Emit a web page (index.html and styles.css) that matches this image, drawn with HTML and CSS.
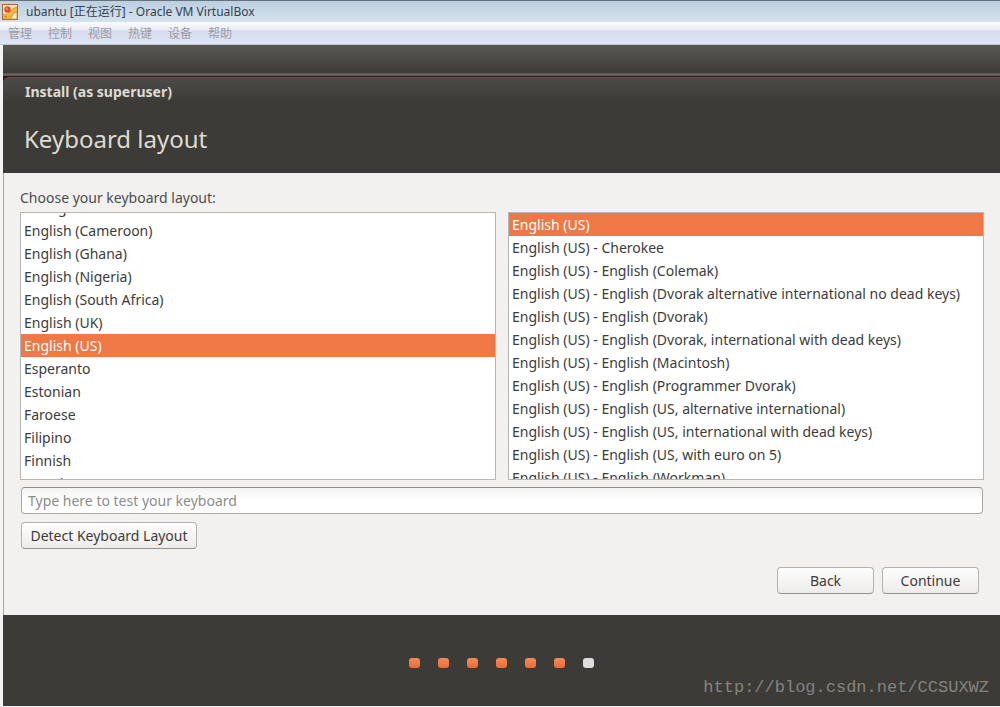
FILE: index.html
```html
<!DOCTYPE html>
<html lang="en">
<head>
<meta charset="utf-8">
<title>ubantu [正在运行] - Oracle VM VirtualBox</title>
<link rel="stylesheet" href="styles.css">
</head>
<body>
<header class="titlebar">
  <svg class="app-icon" viewBox="0 0 16 16" aria-hidden="true">
    <rect x="0.5" y="0.5" width="15" height="15" fill="#f9e5b8" stroke="#a5683c"/>
    <path d="M1 11 Q5 12 8 9 Q9 5 15 3 V8 Q11 9 10 12 Q9 14 8 15 H1Z" fill="#f2b63a"/>
    <path d="M1 10.500 Q6 11 8 8 Q10 4 15 3" fill="none" stroke="#c9812c" stroke-width="0.8"/>
    <path d="M8 15 Q10 14 10 12 Q11 9 15 8 V15Z" fill="#fbeecb" stroke="#c98526" stroke-width="0.8"/>
    <circle cx="5.500" cy="5.500" r="3.200" fill="#d9502c"/>
    <circle cx="4.800" cy="4.800" r="1.300" fill="#ee8a62"/>
    <circle cx="3.500" cy="12.500" r="1" fill="#d9702c"/>
  </svg>
  <span>ubantu [正在运行] - Oracle VM VirtualBox</span>
</header>
<nav class="menubar">
  <button type="button">管理</button>
  <button type="button">控制</button>
  <button type="button">视图</button>
  <button type="button">热键</button>
  <button type="button">设备</button>
  <button type="button">帮助</button>
</nav>
<div class="screen">
  <div class="panel"></div>
  <main class="installer">
    <header class="heading">
      <p class="window-title">Install (as superuser)</p>
      <h1>Keyboard layout</h1>
    </header>
    <form class="content">
      <p class="prompt" id="prompt">Choose your keyboard layout:</p>
      <div class="lists">
        <ul class="list scrolled" role="listbox" aria-labelledby="prompt">
          <li role="option">Dzongkha</li>
          <li role="option">English (Cameroon)</li>
          <li role="option">English (Ghana)</li>
          <li role="option">English (Nigeria)</li>
          <li role="option">English (South Africa)</li>
          <li role="option">English (UK)</li>
          <li role="option" class="selected" aria-selected="true">English (US)</li>
          <li role="option">Esperanto</li>
          <li role="option">Estonian</li>
          <li role="option">Faroese</li>
          <li role="option">Filipino</li>
          <li role="option">Finnish</li>
          <li role="option">French</li>
        </ul>
        <ul class="list" role="listbox" aria-label="Layout variant">
          <li role="option" class="selected" aria-selected="true">English (US)</li>
          <li role="option">English (US) - Cherokee</li>
          <li role="option">English (US) - English (Colemak)</li>
          <li role="option">English (US) - English (Dvorak alternative international no dead keys)</li>
          <li role="option">English (US) - English (Dvorak)</li>
          <li role="option">English (US) - English (Dvorak, international with dead keys)</li>
          <li role="option">English (US) - English (Macintosh)</li>
          <li role="option">English (US) - English (Programmer Dvorak)</li>
          <li role="option">English (US) - English (US, alternative international)</li>
          <li role="option">English (US) - English (US, international with dead keys)</li>
          <li role="option">English (US) - English (US, with euro on 5)</li>
          <li role="option">English (US) - English (Workman)</li>
        </ul>
      </div>
      <input class="test-field" type="text" aria-label="Test your keyboard" placeholder="Type here to test your keyboard">
      <button class="button detect" type="button">Detect Keyboard Layout</button>
      <div class="actions">
        <button class="button step" type="button">Back</button>
        <button class="button step" type="button">Continue</button>
      </div>
    </form>
    <footer class="footer">
      <div class="dots">
        <i class="dot"></i><i class="dot"></i><i class="dot"></i><i class="dot"></i><i class="dot"></i><i class="dot"></i><i class="dot pending"></i>
      </div>
      <span class="watermark">http://blog.csdn.net/CCSUXWZ</span>
    </footer>
  </main>
</div>
</body>
</html>
```

FILE: styles.css
```css
* { box-sizing: border-box; }
html { height: 100%; }
body {
  margin: 0;
  min-height: 100%;
  display: flex;
  flex-direction: column;
  background: #f4f4f4;
  color: #3c3c3c;
  font: 14px/23px "Noto Sans", "Open Sans", sans-serif;
}
p, h1, ul { margin: 0; padding: 0; }
button, input { font: inherit; color: inherit; }

.titlebar {
  display: flex;
  align-items: center;
  gap: 8px;
  height: 22px;
  padding: 0 2px;
  border-top: 1px solid #66727c;
  background: linear-gradient(#bccfe0, #d5e2ee);
  color: #34424f;
  font: 12px/20px "Noto Sans", "Noto Sans CJK SC", sans-serif;
}
.app-icon { width: 16px; height: 16px; }

.menubar {
  display: flex;
  gap: 16px;
  height: 23px;
  padding: 0 8px;
  border-bottom: 1px solid #c3c5cc;
  background: linear-gradient(#fbfcfe, #e9ecf6 35%, #d6dbee 40%, #e0e5f5);
}
.menubar button {
  padding: 0;
  border: 0;
  background: none;
  color: #9b9ca3;
  font: 12px/22px "Noto Sans CJK SC", sans-serif;
}

.screen {
  flex: 1;
  display: flex;
  flex-direction: column;
  margin: 0 0 1px 3px;
}
.panel {
  height: 31px;
  border-bottom: 3px solid #635e58;
  background: linear-gradient(#595852, #3c3b37);
}
.installer {
  flex: 1;
  display: flex;
  flex-direction: column;
  border-top: 1px solid #2c1a22;
  background: #2c1a22;
}
.heading {
  padding: 2px 21px 16px;
  border-top: 1px solid #65504a;
  border-radius: 6px 0 0 0;
  background: linear-gradient(#4d4b47, #3c3b37 24px);
  color: #dfdbd2;
}
.window-title { padding-left: 1px; font-weight: 700; }
.heading h1 {
  padding-top: 18px;
  font-size: 24px;
  line-height: 36px;
  font-weight: 400;
}

.content {
  display: flex;
  flex-direction: column;
  padding: 13px 16px 21px;
  border-left: 1px solid #a9a8a6;
  background: #f2f1f0;
}
.prompt { padding-bottom: 3px; color: #4c4c4c; }
.lists { display: grid; grid-template-columns: 1fr 1fr; gap: 12px; }
.list {
  height: 268px;
  display: flex;
  flex-direction: column;
  overflow: hidden;
  border: 1px solid #b8b5b2;
  background: #fff;
  list-style: none;
}
.scrolled { justify-content: center; padding-bottom: 1px; }
.list li {
  flex: none;
  padding: 0 3px;
  white-space: nowrap;
}
.list .selected { background: #f07746; color: #fff; }

.test-field {
  height: 27px;
  margin: 7px 1px 8px;
  padding: 0 6px;
  border: 1px solid #aaa7a4;
  border-top-color: #8f8c89;
  border-radius: 4px;
  background: linear-gradient(#f3f3f3, #fff 12px);
}
.test-field::placeholder { color: #8c8c8c; opacity: 1; }
.button {
  height: 27px;
  padding: 0 5px;
  border: 1px solid #b3b0ad;
  border-bottom-color: #96938f;
  border-radius: 4px;
  background: linear-gradient(#fefefe, #eeecea);
  line-height: 23px;
}
.detect { align-self: flex-start; min-width: 176px; margin-left: 1px; white-space: nowrap; }
.actions {
  display: flex;
  justify-content: flex-end;
  gap: 8px;
  padding: 18px 5px 0;
}
.step { width: 97px; }

.footer {
  flex: 1;
  display: flex;
  flex-direction: column;
  justify-content: space-between;
  padding: 43px 11px 7px;
  background: #3c3b37;
}
.dots { display: flex; justify-content: center; gap: 18px; }
.dot {
  width: 11px;
  height: 10px;
  border-radius: 3px;
  background: linear-gradient(#f28a5c, #ee6b35);
}
.pending { background: #dedede; }
.watermark {
  align-self: flex-end;
  color: #85837e;
  font: 17px/22px "Liberation Mono", monospace;
}
```
